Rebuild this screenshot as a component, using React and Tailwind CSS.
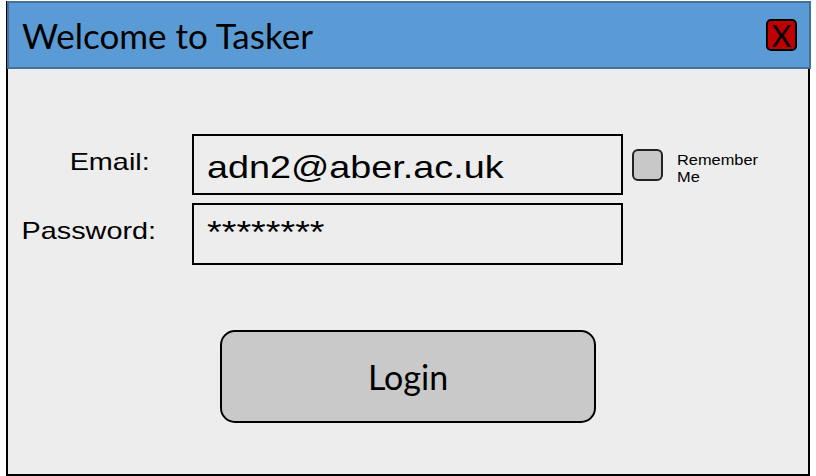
export default function App() {
  const arial = { fontFamily: '"Liberation Sans", Arial, sans-serif' };
  const calibri = { fontFamily: 'Lato, "Open Sans", sans-serif' };

  return (
    <div className="w-[816px] h-[476px] bg-white overflow-hidden">
      <div className="ml-[6px] mt-[1px] w-[804px] h-[475px] border-x-2 border-b-2 border-black bg-[#ededed] flex flex-col">
        {/* title bar */}
        <div className="-ml-[1px] -mr-[3px] h-[68px] shrink-0 border-2 border-[#41719c] bg-[#5b9bd5] flex items-center justify-between pl-[13px] pr-[12px]">
          <h1 style={calibri} className="text-[35px] leading-none text-black">Welcome to Tasker</h1>
          <button className="w-[31px] h-[32px] border-2 border-black rounded-[5px] bg-[#c00000] flex items-center justify-center">
            <span style={calibri} className="text-[30px] leading-none text-black">X</span>
          </button>
        </div>

        {/* form */}
        <div className="flex flex-col pt-[65px]">
          <div className="flex items-start">
            <div className="w-[184px] mt-[16px] pr-[42px] text-right">
              <span style={arial} className="inline-block origin-right scale-x-[1.2] text-[24px] leading-[24px] text-black">Email:</span>
            </div>
            <div className="w-[431px] h-[61px] border-2 border-black pl-[13px] pt-[15px]">
              <span style={arial} className="inline-block origin-left scale-x-[1.18] text-[32px] leading-[32px] text-black">adn2@aber.ac.uk</span>
            </div>
            <div className="ml-[9px] mt-[15px] w-[31px] h-[32px] rounded-[6px] border-2 border-[#222] bg-[#c8c8c8]"></div>
            <div style={arial} className="ml-[14px] mt-[18px] text-[14px] leading-[17px] text-black">
              <span className="inline-block origin-left scale-x-[1.17]">Remember</span>
              <br />
              <span className="inline-block origin-left scale-x-[1.17]">Me</span>
            </div>
          </div>

          <div className="flex items-start mt-[8px]">
            <div className="w-[184px] mt-[16px] pr-[36px] text-right">
              <span style={arial} className="inline-block origin-right scale-x-[1.2] text-[24px] leading-[24px] text-black">Password:</span>
            </div>
            <div className="w-[431px] h-[62px] border-2 border-black pl-[13px] pt-[11px]">
              <span style={arial} className="inline-block origin-left scale-x-[1.18] text-[32px] leading-[32px] text-black">********</span>
            </div>
          </div>

          <button className="mt-[65px] mx-auto w-[376px] h-[93px] rounded-[15px] border-2 border-black bg-[#c9c9c9] flex items-center justify-center">
            <span style={calibri} className="text-[34px] leading-none text-black">Login</span>
          </button>
        </div>
      </div>
    </div>
  );
}
